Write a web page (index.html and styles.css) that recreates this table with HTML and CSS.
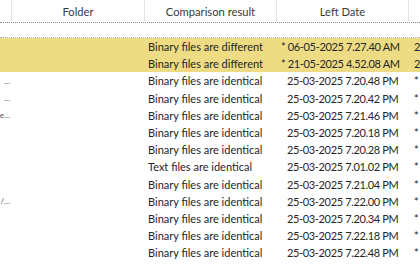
FILE: index.html
```html
<!DOCTYPE html>
<html>
<head>
<meta charset="utf-8">
<link rel="stylesheet" href="styles.css">
</head>
<body>
<div class="grid">
  <div class="head">
    <div class="hc c0"></div>
    <div class="hc">Folder</div>
    <div class="hc">Comparison result</div>
    <div class="hc">Left Date</div>
    <div class="hc last"></div>
  </div>
  <div class="spacer"></div>
  <div class="row sel">
    <div class="c c0"></div><div class="c"></div>
    <div class="c res">Binary files are different</div>
    <div class="c date">* 06-05-2025 7.27.40 AM</div>
    <div class="c rd">2</div>
  </div>
  <div class="row sel">
    <div class="c c0"></div><div class="c"></div>
    <div class="c res">Binary files are different</div>
    <div class="c date">* 21-05-2025 4.52.08 AM</div>
    <div class="c rd">2</div>
  </div>
  <div class="row">
    <div class="c c0"><span class="frag">…</span></div><div class="c"></div>
    <div class="c res">Binary files are identical</div>
    <div class="c date pad">25-03-2025 7.20.48 PM</div>
    <div class="c rd">*</div>
  </div>
  <div class="row">
    <div class="c c0"><span class="frag">…</span></div><div class="c"></div>
    <div class="c res">Binary files are identical</div>
    <div class="c date pad">25-03-2025 7.20.42 PM</div>
    <div class="c rd">*</div>
  </div>
  <div class="row">
    <div class="c c0"><span class="frag">e…</span></div><div class="c"></div>
    <div class="c res">Binary files are identical</div>
    <div class="c date pad">25-03-2025 7.21.46 PM</div>
    <div class="c rd">*</div>
  </div>
  <div class="row">
    <div class="c c0"></div><div class="c"></div>
    <div class="c res">Binary files are identical</div>
    <div class="c date pad">25-03-2025 7.20.18 PM</div>
    <div class="c rd">*</div>
  </div>
  <div class="row">
    <div class="c c0"></div><div class="c"></div>
    <div class="c res">Binary files are identical</div>
    <div class="c date pad">25-03-2025 7.20.28 PM</div>
    <div class="c rd">*</div>
  </div>
  <div class="row">
    <div class="c c0"></div><div class="c"></div>
    <div class="c res">Text files are identical</div>
    <div class="c date pad">25-03-2025 7.01.02 PM</div>
    <div class="c rd">*</div>
  </div>
  <div class="row">
    <div class="c c0"></div><div class="c"></div>
    <div class="c res">Binary files are identical</div>
    <div class="c date pad">25-03-2025 7.21.04 PM</div>
    <div class="c rd">*</div>
  </div>
  <div class="row">
    <div class="c c0"><span class="frag">/…</span></div><div class="c"></div>
    <div class="c res">Binary files are identical</div>
    <div class="c date pad">25-03-2025 7.22.00 PM</div>
    <div class="c rd">*</div>
  </div>
  <div class="row">
    <div class="c c0"></div><div class="c"></div>
    <div class="c res">Binary files are identical</div>
    <div class="c date pad">25-03-2025 7.20.34 PM</div>
    <div class="c rd">*</div>
  </div>
  <div class="row">
    <div class="c c0"></div><div class="c"></div>
    <div class="c res">Binary files are identical</div>
    <div class="c date pad">25-03-2025 7.22.18 PM</div>
    <div class="c rd">*</div>
  </div>
  <div class="row">
    <div class="c c0"></div><div class="c"></div>
    <div class="c res">Binary files are identical</div>
    <div class="c date pad">25-03-2025 7.22.48 PM</div>
    <div class="c rd">*</div>
  </div>
</div>
</body>
</html>
```
FILE: styles.css
```css
html, body {
  margin: 0;
  padding: 0;
  background: #ffffff;
  width: 420px;
  height: 280px;
  overflow: hidden;
}
.grid {
  font-family: Lato, "Noto Sans", sans-serif;
  font-size: 11px;
  color: #262626;
}
.head, .row {
  display: grid;
  grid-template-columns: 12px 133px 132px 132px 11px;
}
.head {
  height: 22px;
  border-bottom: 1px dotted #8a8a8a;
  color: #3a3a3a;
}
.hc {
  display: flex;
  align-items: center;
  justify-content: center;
  border-right: 1px solid #e3e3e3;
  padding-top: 1px;
  font-size: 11.2px;
}
.hc.last { border-right: none; }
.spacer {
  height: 14px;
  border-bottom: 1px dotted #b0b0b0;
}
.row {
  height: 17.2px;
  align-items: center;
  white-space: nowrap;
}
.row.sel { background: #eedc84; }
.c { overflow: hidden; }
.res { padding-left: 3px; }
.date { padding-left: 4px; letter-spacing: -0.35px; }
.date.pad { padding-left: 10px; }
.rd { padding-left: 5px; }
.c0 { display: flex; justify-content: flex-end; }
.frag { font-size: 8px; color: #555; padding-right: 2px; }
```
